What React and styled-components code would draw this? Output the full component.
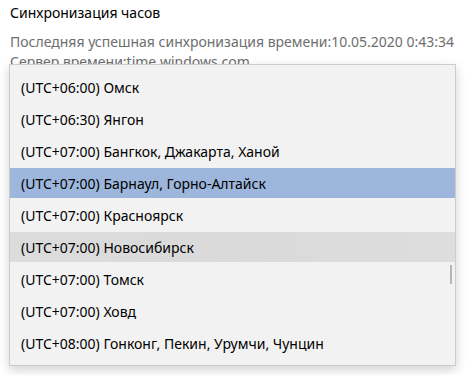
import React from 'react';
import styled, { createGlobalStyle } from 'styled-components';

const GlobalStyle = createGlobalStyle`
  html, body {
    margin: 0;
    padding: 0;
    background: #ffffff;
  }
  body {
    font-family: "Noto Sans", "Open Sans", sans-serif;
    -webkit-font-smoothing: antialiased;
  }
`;

const Page = styled.div`
  position: relative;
  width: 472px;
  height: 375px;
  overflow: hidden;
  padding: 2px 10px 0;
  box-sizing: border-box;
`;

const Title = styled.div`
  font-size: 14px;
  line-height: 22px;
  color: #000;
`;

const Info = styled.div`
  margin-top: 8px;
  font-size: 14px;
  line-height: 20px;
  color: #6e6e6e;
`;

const Popup = styled.div`
  position: absolute;
  top: 64px;
  left: 9px;
  width: 447px;
  box-sizing: border-box;
  background: #f2f2f2;
  border: 1px solid #cccccc;
  box-shadow: 0 4px 10px rgba(0, 0, 0, 0.18);
  padding: 7px 0 7px;
  display: flex;
  flex-direction: column;
  gap: 2px;
`;

const Item = styled.div`
  height: 30px;
  display: flex;
  align-items: center;
  padding-left: 11px;
  font-size: 14px;
  color: #000;
  background: ${p =>
    p.$selected ? '#9db6dc' : p.$hover ? 'linear-gradient(90deg, #dcdcdc 0%, #dadada 50%, #dddddd 100%)' : 'transparent'};
`;

const Scroll = styled.div`
  position: absolute;
  right: 3px;
  top: 200px;
  width: 2px;
  height: 19px;
  background: #b5b5b5;
`;

const zones = [
  '(UTC+06:00) Омск',
  '(UTC+06:30) Янгон',
  '(UTC+07:00) Бангкок, Джакарта, Ханой',
  '(UTC+07:00) Барнаул, Горно-Алтайск',
  '(UTC+07:00) Красноярск',
  '(UTC+07:00) Новосибирск',
  '(UTC+07:00) Томск',
  '(UTC+07:00) Ховд',
  '(UTC+08:00) Гонконг, Пекин, Урумчи, Чунцин',
];

export default function App() {
  return (
    <Page>
      <GlobalStyle />
      <Title>Синхронизация часов</Title>
      <Info>
        Последняя успешная синхронизация времени:10.05.2020 0:43:34
        <br />
        Сервер времени:time.windows.com
      </Info>
      <Popup>
        {zones.map((z, i) => (
          <Item key={z} $selected={i === 3} $hover={i === 5}>
            {z}
          </Item>
        ))}
        <Scroll />
      </Popup>
    </Page>
  );
}
